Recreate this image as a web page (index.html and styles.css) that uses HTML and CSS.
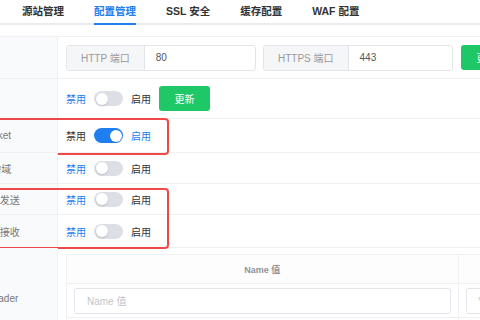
FILE: index.html
```html
<!DOCTYPE html>
<html lang="zh-CN">
<head>
    <meta charset="UTF-8">
    <meta name="viewport" content="width=device-width, initial-scale=1.0">
    <title>配置管理</title>
    <link rel="stylesheet" href="styles.css">
</head>
<body>
    <div class="tabs">
        <span class="tab">源站管理</span>
        <span class="tab active">配置管理</span>
        <span class="tab">SSL 安全</span>
        <span class="tab">缓存配置</span>
        <span class="tab">WAF 配置</span>
    </div>

    <div class="form">
        <div class="row row-port">
            <div class="label">端口</div>
            <div class="field">
                <div class="input-group">
                    <span class="prefix">HTTP 端口</span>
                    <span class="input">80</span>
                </div>
                <div class="input-group">
                    <span class="prefix">HTTPS 端口</span>
                    <span class="input">443</span>
                </div>
                <button class="btn">更新</button>
            </div>
        </div>

        <div class="row row-https">
            <div class="label">HSTS</div>
            <div class="field">
                <span class="off-text on">禁用</span>
                <span class="switch"></span>
                <span class="on-text">启用</span>
                <button class="btn">更新</button>
            </div>
        </div>

        <div class="row row-ws">
            <div class="label">WebSocket</div>
            <div class="field">
                <span class="off-text">禁用</span>
                <span class="switch checked"></span>
                <span class="on-text on">启用</span>
            </div>
            <div class="mark mark-ws"></div>
        </div>

        <div class="row row-cors">
            <div class="label">CORS 跨域</div>
            <div class="field">
                <span class="off-text on">禁用</span>
                <span class="switch"></span>
                <span class="on-text">启用</span>
            </div>
        </div>

        <div class="group">
            <div class="row row-send">
                <div class="label">Proxy 缓冲发送</div>
                <div class="field">
                    <span class="off-text on">禁用</span>
                    <span class="switch"></span>
                    <span class="on-text">启用</span>
                </div>
            </div>
            <div class="row row-recv">
                <div class="label">Proxy 缓冲接收</div>
                <div class="field">
                    <span class="off-text on">禁用</span>
                    <span class="switch"></span>
                    <span class="on-text">启用</span>
                </div>
            </div>
            <div class="mark mark-proxy"></div>
        </div>

        <div class="row row-header">
            <div class="label">自定义 Header</div>
            <div class="field field-table">
                <table class="kv">
                    <thead>
                        <tr>
                            <th>Name 值</th>
                            <th>Value 值</th>
                        </tr>
                    </thead>
                    <tbody>
                        <tr>
                            <td><span class="cell-input">Name 值</span></td>
                            <td><span class="cell-input">Value 值</span></td>
                        </tr>
                        <tr class="spacer">
                            <td></td>
                            <td></td>
                        </tr>
                    </tbody>
                </table>
            </div>
        </div>
    </div>
</body>
</html>
```

FILE: styles.css
```css
* {
    box-sizing: border-box;
}

body {
    margin: 0;
    width: 480px;
    height: 320px;
    overflow: hidden;
    background: #fff;
    font-family: "Liberation Sans", "Noto Sans CJK SC", sans-serif;
    font-size: 10px;
    color: #333;
}

/* tab bar */
.tabs {
    display: flex;
    height: 25px;
    padding-left: 7px;
    border-bottom: 2px solid #e9ebef;
}

.tab {
    margin: 0 15px;
    height: 25px;
    line-height: 23px;
    font-size: 10.5px;
    font-weight: 600;
    color: #333;
    border-bottom: 2px solid transparent;
}

.tab.active {
    color: #2080f0;
    border-bottom-color: #2080f0;
}

/* form table */
.form {
    width: 620px;
    margin-top: 11px;
    margin-left: -86px;
    border-top: 1px solid #eef0f4;
    position: relative;
}

.row {
    display: grid;
    grid-template-columns: 144px 1fr;
    border-bottom: 1px solid #eef0f4;
    position: relative;
}

.row-port { height: 42px; }
.row-https { height: 40px; }
.row-ws { height: 34px; }
.row-cors { height: 31px; }
.row-send { height: 31px; }
.row-recv { height: 33px; }
.row-header { border-bottom: none; }

.label {
    display: flex;
    align-items: center;
    justify-content: center;
    background: #f9fafb;
    border-right: 1px solid #eef0f4;
    color: #777;
    font-size: 10px;
    white-space: nowrap;
}

.field {
    display: flex;
    align-items: center;
    gap: 8px;
    padding: 0 8px;
}

.input-group {
    display: flex;
    width: 190px;
    height: 26px;
    border: 1px solid #e3e5ea;
    border-radius: 3px;
    overflow: hidden;
}

.input-group + .input-group {
    margin-left: -1px;
}

.prefix {
    display: flex;
    align-items: center;
    padding: 0 14px;
    background: #f5f6f8;
    border-right: 1px solid #e3e5ea;
    color: #999;
    white-space: nowrap;
}

.input {
    display: flex;
    align-items: center;
    flex: 1;
    padding: 0 11px;
    color: #555;
}

.btn {
    width: 51px;
    height: 25px;
    border: none;
    border-radius: 3px;
    background: #1fc866;
    color: #fff;
    font-family: inherit;
    font-size: 10px;
    padding: 0;
}

.off-text, .on-text {
    color: #333;
}

.off-text.on, .on-text.on {
    color: #2080f0;
}

/* switch */
.switch {
    position: relative;
    width: 29px;
    height: 15px;
    border-radius: 8px;
    background: #dcdfe5;
    flex-shrink: 0;
}

.switch::after {
    content: "";
    position: absolute;
    top: 1.5px;
    left: 1.5px;
    width: 12px;
    height: 12px;
    border-radius: 50%;
    background: #fff;
    box-shadow: 0 1px 2px rgba(0, 0, 0, 0.15);
}

.switch.checked {
    background: #1f7ff0;
}

.switch.checked::after {
    left: 15.5px;
}

/* red annotation boxes */
.group {
    position: relative;
}

.mark {
    position: absolute;
    left: 0;
    width: 255px;
    border: 2.5px solid #f04848;
    border-radius: 4px;
}

.mark-ws {
    top: -1px;
    height: 37px;
}

.mark-proxy {
    top: 4px;
    height: 61px;
}

/* header key/value table */
.field-table {
    padding: 6px 8px 7px;
    align-items: flex-start;
}

.kv {
    border-collapse: collapse;
    table-layout: fixed;
    width: 784px;
}

.kv th {
    height: 29px;
    border: 1px solid #eef0f4;
    background: #fdfdfe;
    color: #909399;
    font-size: 9px;
    font-weight: bold;
    text-align: center;
}

.kv td {
    height: 34px;
    padding: 0 7px;
    border: 1px solid #eef0f4;
}

.kv .spacer td {
    height: 21px;
}

.cell-input {
    display: flex;
    align-items: center;
    height: 26px;
    padding: 0 12px;
    border: 1px solid #e3e5ea;
    border-radius: 3px;
    color: #c0c4cc;
}
```
